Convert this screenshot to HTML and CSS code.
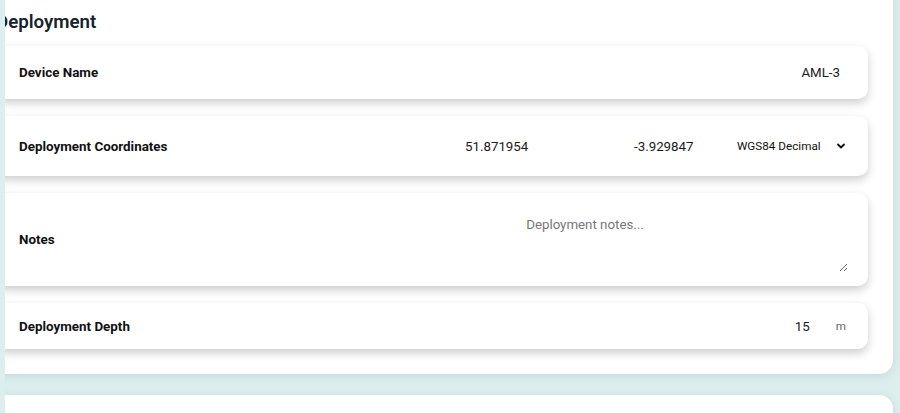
FILE: index.html
```html
<!DOCTYPE html>
<html>
<head>
<meta charset="utf-8">
<link rel="stylesheet" href="styles.css">
</head>
<body>
<div class="viewport">
  <section class="panel">
    <h2 class="title">Deployment</h2>
    <div class="card card-name">
      <span class="label">Device Name</span>
      <span class="value">AML-3</span>
    </div>
    <div class="card card-coords">
      <span class="label">Deployment Coordinates</span>
      <span class="value lat">51.871954</span>
      <span class="value lon">-3.929847</span>
      <span class="select">WGS84 Decimal
        <svg class="chev" width="10" height="10" viewBox="0 0 10 10"><path d="M2 3.5 L5 6.5 L8 3.5" fill="none" stroke="#111" stroke-width="1.8" stroke-linecap="round" stroke-linejoin="round"/></svg>
      </span>
    </div>
    <div class="card card-notes">
      <span class="label">Notes</span>
      <textarea class="notes" placeholder="Deployment notes..."></textarea>
    </div>
    <div class="card card-depth">
      <span class="label">Deployment Depth</span>
      <span class="value">15</span>
      <span class="unit">m</span>
    </div>
  </section>
  <section class="panel panel-next"></section>
</div>
</body>
</html>
```
FILE: styles.css
```css
html, body {
  margin: 0;
  padding: 0;
  background: #dcefee;
  font-family: Roboto, "Noto Sans", sans-serif;
}
.viewport {
  margin-left: 5px;
  height: 413px;
  overflow: hidden;
}
.panel {
  box-sizing: border-box;
  width: 922px;
  margin-left: -34px;
  margin-top: -20px;
  padding: 20px 25px 25px 25px;
  background: #fff;
  border-radius: 14px;
  box-shadow: 0 2px 10px rgba(80, 120, 120, 0.18);
}
.panel-next {
  margin-top: 21px;
  height: 60px;
  padding: 0;
}
.title {
  margin: 0;
  height: 46px;
  line-height: 44px;
  font-size: 18.7px;
  font-weight: 600;
  color: #17232d;
}
.card {
  display: flex;
  align-items: center;
  background: #fff;
  border-radius: 10px;
  box-shadow: 0 4px 10px rgba(0, 0, 0, 0.2);
  padding: 0 20px 0 23px;
  margin-bottom: 17px;
}
.card:last-child { margin-bottom: 0; }
.label {
  flex: 1;
  font-size: 13.4px;
  font-weight: 700;
  color: #111;
}
.value {
  font-size: 13.3px;
  color: #1a1a1a;
}
.card-name { height: 53px; padding-right: 28px; }
.card-coords { height: 60px; padding-right: 18px; }
.lat { width: 169px; }
.lon { width: 103px; }
.select {
  width: 113px;
  display: flex;
  align-items: center;
  justify-content: space-between;
  font-size: 11.7px;
  color: #111;
}
.chev { margin-right: 4px; }
.card-notes { height: 93px; padding-right: 20px; }
.notes {
  box-sizing: border-box;
  width: 526px;
  height: 62px;
  margin-top: 2px;
  padding: 7px 10px 10px;
  border: none;
  outline: none;
  resize: vertical;
  text-align: center;
  font-family: Roboto, "Noto Sans", sans-serif;
  font-size: 13.3px;
  color: #222;
  background: transparent;
}
.notes::placeholder { color: #777; }
.card-depth { height: 46px; padding-right: 22px; }
.card-depth .value { width: 30px; text-align: right; }
.unit {
  margin-left: 26px;
  font-size: 11.7px;
  color: #666;
}
```
